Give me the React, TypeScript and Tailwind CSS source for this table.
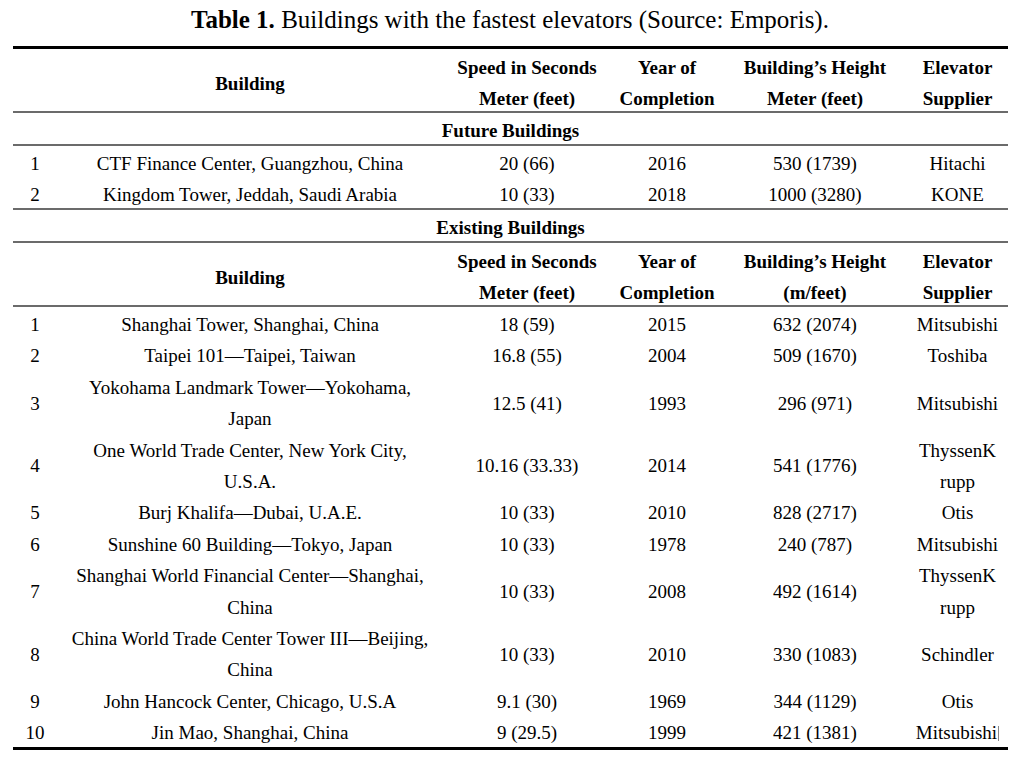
const futureBuildings = [
  { no: "1", name: ["CTF Finance Center, Guangzhou, China"], speed: "20 (66)", year: "2016", height: "530 (1739)", supplier: ["Hitachi"] },
  { no: "2", name: ["Kingdom Tower, Jeddah, Saudi Arabia"], speed: "10 (33)", year: "2018", height: "1000 (3280)", supplier: ["KONE"] },
];

const existingBuildings = [
  { no: "1", name: ["Shanghai Tower, Shanghai, China"], speed: "18 (59)", year: "2015", height: "632 (2074)", supplier: ["Mitsubishi"] },
  { no: "2", name: ["Taipei 101\u2014Taipei, Taiwan"], speed: "16.8 (55)", year: "2004", height: "509 (1670)", supplier: ["Toshiba"] },
  { no: "3", name: ["Yokohama Landmark Tower\u2014Yokohama,", "Japan"], speed: "12.5 (41)", year: "1993", height: "296 (971)", supplier: ["Mitsubishi"] },
  { no: "4", name: ["One World Trade Center, New York City,", "U.S.A."], speed: "10.16 (33.33)", year: "2014", height: "541 (1776)", supplier: ["ThyssenK", "rupp"] },
  { no: "5", name: ["Burj Khalifa\u2014Dubai, U.A.E."], speed: "10 (33)", year: "2010", height: "828 (2717)", supplier: ["Otis"] },
  { no: "6", name: ["Sunshine 60 Building\u2014Tokyo, Japan"], speed: "10 (33)", year: "1978", height: "240 (787)", supplier: ["Mitsubishi"] },
  { no: "7", name: ["Shanghai World Financial Center\u2014Shanghai,", "China"], speed: "10 (33)", year: "2008", height: "492 (1614)", supplier: ["ThyssenK", "rupp"] },
  { no: "8", name: ["China World Trade Center Tower III\u2014Beijing,", "China"], speed: "10 (33)", year: "2010", height: "330 (1083)", supplier: ["Schindler"] },
  { no: "9", name: ["John Hancock Center, Chicago, U.S.A"], speed: "9.1 (30)", year: "1969", height: "344 (1129)", supplier: ["Otis"] },
  { no: "10", name: ["Jin Mao, Shanghai, China"], speed: "9 (29.5)", year: "1999", height: "421 (1381)", supplier: ["Mitsubishi"], cursor: true },
];

type Row = (typeof existingBuildings)[number] | (typeof futureBuildings)[number];

// the print has its glyphs sitting a little low in each line,
// so cell text gets a top pad that is taken back underneath
function Cell({ children, head = false, span }: { children?: React.ReactNode; head?: boolean; span?: number }) {
  return (
    <td colSpan={span} className="text-center align-middle">
      <div className={head ? "pt-[3px] -mb-[3px]" : "pt-[2px] -mb-[2px]"}>{children}</div>
    </td>
  );
}

function Lines({ lines }: { lines: string[] }) {
  return (
    <>
      {lines.map((line, i) => (
        <span key={i} className="block">
          {line}
        </span>
      ))}
    </>
  );
}

function HeaderRow({ heightLabel }: { heightLabel: string }) {
  return (
    <tr className="border-b-2 border-[#6b6b6b] font-bold leading-[31px]">
      <td></td>
      <Cell head>Building</Cell>
      <Cell head>
        Speed in Seconds
        <br />
        Meter (feet)
      </Cell>
      <Cell head>
        Year of
        <br />
        Completion
      </Cell>
      <Cell head>
        Building’s Height
        <br />
        {heightLabel}
      </Cell>
      <Cell head>
        Elevator
        <br />
        Supplier
      </Cell>
    </tr>
  );
}

function SectionRow({ label }: { label: string }) {
  return (
    <tr className="border-b-2 border-[#6b6b6b] leading-[31px] font-bold">
      <Cell span={6}>{label}</Cell>
    </tr>
  );
}

function DataRow({ row, className }: { row: Row; className: string }) {
  return (
    <tr className={className}>
      <Cell>{row.no}</Cell>
      <Cell>
        <Lines lines={row.name} />
      </Cell>
      <Cell>{row.speed}</Cell>
      <Cell>{row.year}</Cell>
      <Cell>{row.height}</Cell>
      <Cell>
        {"cursor" in row && row.cursor ? (
          <span>
            {row.supplier[0]}
            <span className="inline-block ml-px w-px h-[15px] bg-[#888] align-[-2px]"></span>
          </span>
        ) : (
          <Lines lines={row.supplier} />
        )}
      </Cell>
    </tr>
  );
}

export default function App() {
  return (
    <div className="w-[1020px] h-[760px] bg-white text-black font-['Liberation_Serif','Times_New_Roman',serif] overflow-hidden">
      <div className="h-[46px] pt-[5px] text-center text-[25px] leading-[30px]">
        <span className="font-bold">Table 1.</span> Buildings with the fastest elevators (Source: Emporis).
      </div>

      <table className="ml-[13px] w-[995px] table-fixed border-collapse text-[19px]">
        <colgroup>
          <col className="w-[44px]" />
          <col className="w-[386px]" />
          <col className="w-[168px]" />
          <col className="w-[112px]" />
          <col className="w-[184px]" />
          <col className="w-[101px]" />
        </colgroup>
        <tbody className="border-t-[3px] border-b-[3px] border-black">
          <HeaderRow heightLabel="Meter (feet)" />
          <SectionRow label="Future Buildings" />
          {futureBuildings.map((row, i) => (
            <DataRow
              key={row.no}
              row={row}
              className={
                i === futureBuildings.length - 1
                  ? "leading-[31px] border-b-2 border-[#6b6b6b]"
                  : "leading-[31px]"
              }
            />
          ))}
          <SectionRow label="Existing Buildings" />
          <HeaderRow heightLabel="(m/feet)" />
          {existingBuildings.map((row) => (
            <DataRow key={row.no} row={row} className="leading-[31.4px]" />
          ))}
        </tbody>
      </table>
    </div>
  );
}
